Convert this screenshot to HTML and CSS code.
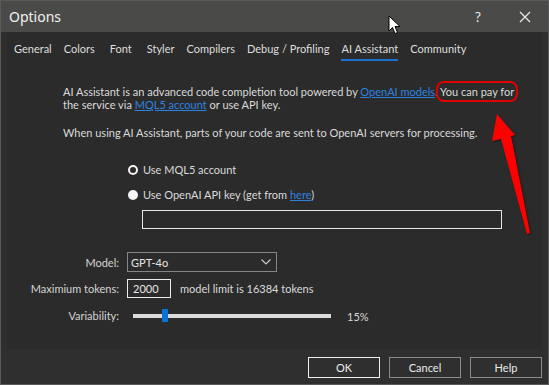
FILE: index.html
```html
<!DOCTYPE html>
<html lang="en">
<head>
  <meta charset="UTF-8" />
  <title>Options</title>
  <link rel="stylesheet" href="styles.css">
</head>
<body>
  <div class="window">
    <div class="titlebar">
      <span class="title">Options</span>
      <span class="title-btn help-btn">?</span>
      <span class="title-btn close-btn">
        <svg width="12" height="12" viewBox="0 0 12 12"><path d="M1 1 L11 11 M11 1 L1 11" stroke="#e8e8e8" stroke-width="1.3" fill="none"/></svg>
      </span>
    </div>

    <div class="panel">
      <div class="tabs">
        <span class="tab">General</span>
        <span class="tab">Colors</span>
        <span class="tab wide">Font</span>
        <span class="tab wide">Styler</span>
        <span class="tab">Compilers</span>
        <span class="tab">Debug / Profiling</span>
        <span class="tab active">AI Assistant</span>
        <span class="tab">Community</span>
      </div>

      <div class="content">
        <p class="intro">AI Assistant is an advanced code completion tool powered by <a href="#">OpenAI models</a>. <span class="highlight">You can pay for</span><br>
        the service via <a href="#">MQL5 account</a> or use API key.</p>
        <p class="intro second">When using AI Assistant, parts of your code are sent to OpenAI servers for processing.</p>

        <div class="radios">
          <div class="radio-row"><span class="radio ring"></span><span>Use MQL5 account</span></div>
          <div class="radio-row"><span class="radio filled"></span><span>Use OpenAI API key (get from <a href="#">here</a>)</span></div>
          <div class="key-input"></div>
        </div>
      </div>

      <div class="form">
        <label>Model:</label>
        <div class="select">GPT-4o
          <svg width="10" height="6" viewBox="0 0 10 6"><path d="M0.5 0.5 L5 5 L9.5 0.5" stroke="#cfcfcf" stroke-width="1.1" fill="none"/></svg>
        </div>

        <label>Maximium tokens:</label>
        <div class="token-row"><div class="token-input">2000</div><span>model limit is 16384 tokens</span></div>

        <label>Variability:</label>
        <div class="slider-row">
          <div class="track"><div class="thumb"></div></div>
          <span class="percent">15%</span>
        </div>
      </div>
    </div>

    <div class="buttons">
      <button class="btn default">OK</button>
      <button class="btn">Cancel</button>
      <button class="btn">Help</button>
    </div>

    <!-- annotation arrow -->
    <svg class="arrow" width="549" height="385" viewBox="0 0 549 385">
      <polygon points="497,114 515,135 511,136 530,233 527,234 501,139 492,141" fill="#ff0000"/>
    </svg>

    <svg class="cursor" width="14" height="20" viewBox="0 0 14 20">
      <path d="M1 1 L1 16 L4.5 12.5 L7 18.5 L9.5 17.5 L7 11.5 L12 11.5 Z" fill="#ffffff" stroke="#000" stroke-width="1"/>
    </svg>
  </div>
</body>
</html>
```

FILE: styles.css
```css
body {
  margin: 0;
  background: #2f2f2f;
  font-family: Lato, 'Noto Sans', sans-serif;
  font-size: 11px;
  color: #dadada;
}

.window {
  position: relative;
  width: 549px;
  height: 385px;
  box-sizing: border-box;
  border: 1px solid #5a5a5a;
  background: #2f2f2f;
  overflow: hidden;
}

.titlebar {
  height: 31px;
  background: #4a4a48;
  display: flex;
  align-items: center;
  padding-left: 8px;
}

.title {
  font-family: 'Noto Sans', sans-serif;
  font-size: 14px;
  color: #f2f2f2;
  flex: 1;
}

.title-btn {
  color: #e8e8e8;
  font-size: 14px;
  display: flex;
  align-items: center;
}

.help-btn {
  margin-right: 38px;
}

.close-btn {
  margin-right: 17px;
}

.panel {
  margin: 0 6px;
  height: 317px;
  background: #2b2b2b;
}

.tabs {
  display: flex;
  gap: 12px;
  padding: 9px 0 0 7px;
}

.tab {
  line-height: 16px;
  padding-bottom: 2px;
  border-bottom: 2px solid transparent;
  color: #dedede;
}

.tab.wide {
  margin-left: 3px;
}

.tab.active {
  border-bottom-color: #1a72d0;
}

.content {
  padding: 24px 0 0 56px;
}

.intro {
  margin: 0;
  line-height: 13px;
  white-space: nowrap;
}

.intro.second {
  margin-top: 15px;
}

a {
  color: #2b83e0;
  text-decoration: underline;
}

.highlight {
  outline: 2px solid #e00000;
  outline-offset: 2px;
  border-radius: 4px;
}

.radios {
  margin: 23px 0 0 65px;
}

.radio-row {
  display: flex;
  align-items: center;
  line-height: 16px;
  margin-bottom: 9px;
}

.radio {
  width: 10px;
  height: 10px;
  border-radius: 50%;
  box-sizing: border-box;
  margin-right: 5px;
}

.radio.ring {
  border: 2px solid #f4f4f4;
}

.radio.filled {
  background: #f4f4f4;
}

.key-input {
  margin: -2px 0 0 14px;
  width: 360px;
  height: 19px;
  box-sizing: border-box;
  border: 1px solid #e6e6e6;
}

.form {
  display: grid;
  grid-template-columns: 112px auto;
  column-gap: 8px;
  row-gap: 7px;
  margin-top: 23px;
  align-items: center;
}

.form label {
  text-align: right;
  white-space: nowrap;
  color: #d4d4d4;
}

.select {
  width: 150px;
  height: 20px;
  box-sizing: border-box;
  border: 1px solid #858585;
  display: flex;
  align-items: center;
  justify-content: space-between;
  padding: 0 5px 0 3px;
  color: #e6e6e6;
}

.token-row {
  display: flex;
  align-items: center;
  gap: 9px;
}

.token-input {
  width: 44px;
  height: 19px;
  box-sizing: border-box;
  border: 1px solid #ececec;
  padding-left: 5px;
  line-height: 17px;
  color: #e6e6e6;
}

.slider-row {
  display: flex;
  align-items: center;
  height: 20px;
  margin-top: 1px;
}

.track {
  position: relative;
  width: 198px;
  height: 4px;
  margin-left: 6px;
  background: #dcdcdc;
}

.thumb {
  position: absolute;
  left: 29px;
  top: -5px;
  width: 6px;
  height: 13px;
  background: #0a74d6;
}

.percent {
  margin-left: 16px;
}

.buttons {
  display: flex;
  justify-content: flex-end;
  gap: 9px;
  padding: 8px 6px 0 0;
}

.btn {
  width: 72px;
  height: 21px;
  background: #2f2f2f;
  border: 1px solid #8c8c8c;
  color: #ececec;
  font-family: Lato, 'Noto Sans', sans-serif;
  font-size: 11px;
  padding: 0;
}

.btn.default {
  border-color: #f0f0f0;
}

.arrow {
  position: absolute;
  left: -1px;
  top: -1px;
  pointer-events: none;
  filter: drop-shadow(1px 1px 1px rgba(0,0,0,0.4));
}

.cursor {
  position: absolute;
  left: 387px;
  top: 14px;
}
```
